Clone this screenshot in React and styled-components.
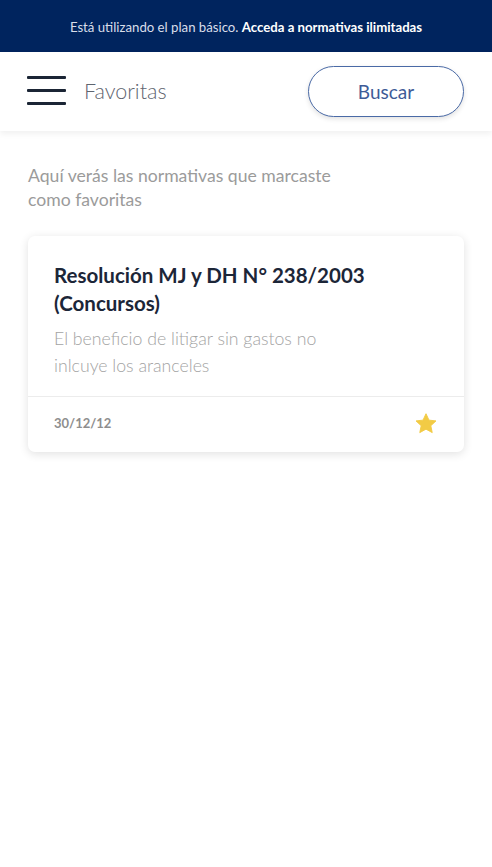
import React from "react";
import styled, { createGlobalStyle } from "styled-components";

const Global = createGlobalStyle`
  html, body { margin: 0; padding: 0; background: #fff; }
  body { font-family: Lato, "Open Sans", sans-serif; -webkit-font-smoothing: antialiased; }
  * { box-sizing: border-box; }
`;

const Page = styled.div`
  min-height: 867px;
  background: #fff;
`;

const Banner = styled.div`
  height: 52px;
  background: #00245e;
  color: #d9deea;
  font-size: 13.2px;
  display: flex;
  align-items: center;
  justify-content: center;
  padding-top: 1px;
  b { color: #fff; font-weight: 700; }
`;

const Header = styled.header`
  height: 79px;
  display: flex;
  align-items: center;
  justify-content: space-between;
  padding: 0 28px 2px 27px;
  box-shadow: 0 3px 6px rgba(0, 0, 0, 0.06);
  position: relative;
`;

const Left = styled.div`
  display: flex;
  align-items: center;
  gap: 18px;
`;

const Burger = styled.div`
  width: 39px;
  display: flex;
  flex-direction: column;
  gap: 10px;
  span {
    display: block;
    height: 3px;
    border-radius: 1px;
    background: #1b2535;
  }
`;

const Title = styled.div`
  font-size: 21.5px;
  font-weight: 300;
  color: #5f6570;
`;

const SearchButton = styled.button`
  width: 156px;
  height: 51px;
  border-radius: 26px;
  border: 1.5px solid #4a6aa6;
  background: #fff;
  color: #3e5b97;
  font-family: inherit;
  font-size: 19px;
  font-weight: 400;
  box-shadow: 0 2px 5px rgba(0, 0, 0, 0.12);
  margin-top: 2px;
`;

const Content = styled.main`
  padding: 33px 28px 0 28px;
`;

const Intro = styled.p`
  margin: 0 0 24px 0;
  font-size: 17.6px;
  line-height: 24px;
  color: #9b9b9b;
  max-width: 330px;
`;

const Card = styled.article`
  border-radius: 7px;
  background: #fff;
  box-shadow: 0 2px 10px rgba(0, 0, 0, 0.12);
  overflow: hidden;
`;

const CardBody = styled.div`
  padding: 25px 26px 17px 26px;
  border-bottom: 1.5px solid #ececec;
`;

const CardTitle = styled.h2`
  margin: 0 0 8px 0;
  font-size: 20.5px;
  line-height: 28px;
  font-weight: 700;
  color: #1c2638;
`;

const CardText = styled.p`
  margin: 0;
  font-size: 17.7px;
  line-height: 27px;
  font-weight: 300;
  color: #a3a3a3;
  max-width: 300px;
`;

const CardFooter = styled.div`
  height: 55px;
  display: flex;
  align-items: center;
  justify-content: space-between;
  padding: 0 26px 3px 26px;
`;

const Date = styled.span`
  font-size: 13px;
  font-weight: 700;
  color: #8e8e8e;
`;

const Star = () => (
  <svg width="24" height="23" viewBox="0 0 24 24">
    <path
      d="M12 1.8l3.1 6.7 7.3.8-5.4 5 1.5 7.2L12 17.9l-6.5 3.6L7 14.3 1.6 9.3l7.3-.8z"
      fill="#f2cb45"
      stroke="#f2cb45"
      strokeWidth="1"
      strokeLinejoin="round"
    />
  </svg>
);

export default function App() {
  return (
    <Page>
      <Global />
      <Banner>
        <span>
          Está utilizando el plan básico. <b>Acceda a normativas ilimitadas</b>
        </span>
      </Banner>
      <Header>
        <Left>
          <Burger>
            <span />
            <span />
            <span />
          </Burger>
          <Title>Favoritas</Title>
        </Left>
        <SearchButton>Buscar</SearchButton>
      </Header>
      <Content>
        <Intro>Aquí verás las normativas que marcaste como favoritas</Intro>
        <Card>
          <CardBody>
            <CardTitle>
              Resolución MJ y DH N° 238/2003 (Concursos)
            </CardTitle>
            <CardText>El beneficio de litigar sin gastos no inlcuye los aranceles</CardText>
          </CardBody>
          <CardFooter>
            <Date>30/12/12</Date>
            <Star />
          </CardFooter>
        </Card>
      </Content>
    </Page>
  );
}
